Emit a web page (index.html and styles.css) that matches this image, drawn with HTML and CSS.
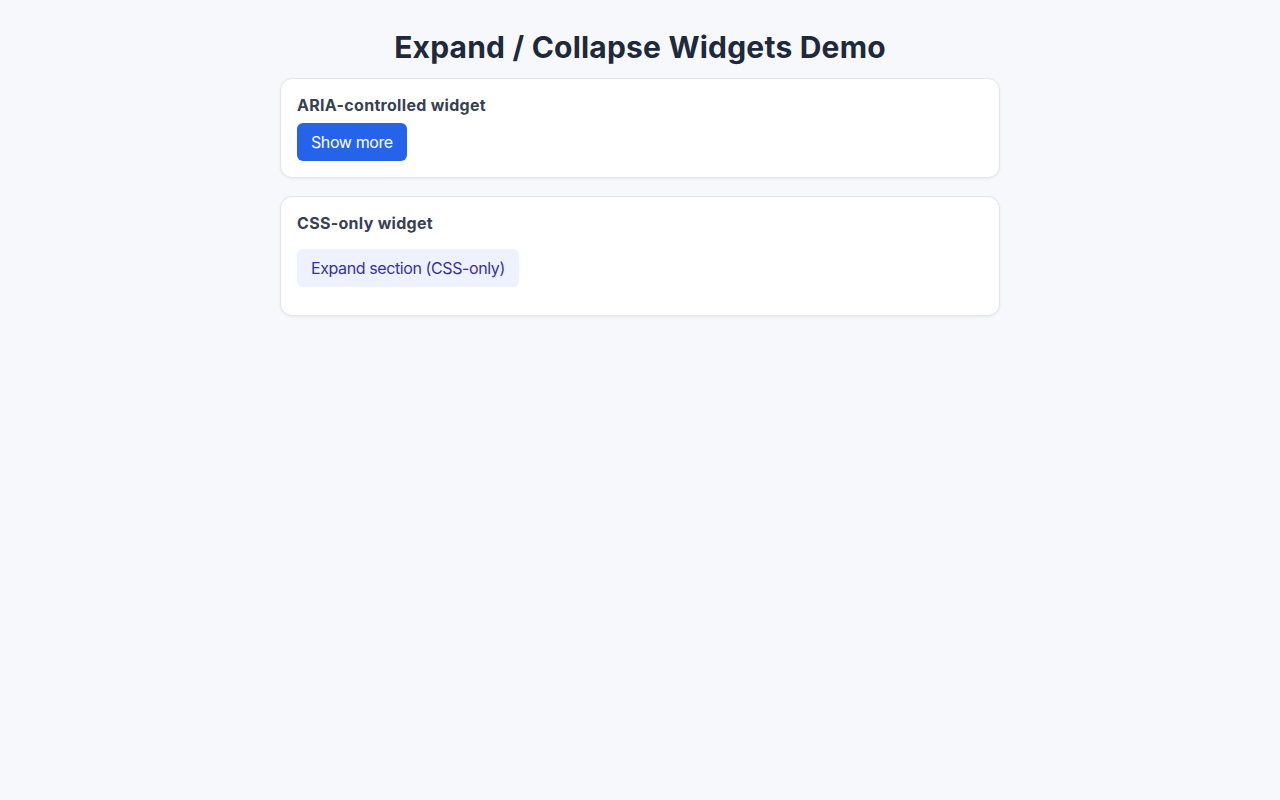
FILE: index.html
```html
<!DOCTYPE html>
<html lang="en">
<head>
    <meta charset="UTF-8">
    <meta name="viewport" content="width=device-width, initial-scale=1.0">
    <title>Expand / Collapse Widgets Demo</title>
    <link rel="stylesheet" href="styles.css">
</head>
<body>

    <main class="container">
        <h1>Expand / Collapse Widgets Demo</h1>

        <!-- Widget com aria-expanded -->
        <section class="card">
            <h2>ARIA-controlled widget</h2>
            <button class="btn-primary" id="toggleBtn" aria-expanded="false" aria-controls="ariaPanel">Show more</button>
            <div class="panel" id="ariaPanel" hidden>
                <p>This content is shown and hidden using JavaScript and aria-expanded.</p>
            </div>
        </section>

        <!-- Widget só com CSS -->
        <section class="card">
            <h2>CSS-only widget</h2>
            <input type="checkbox" id="cssToggle" class="css-toggle">
            <label for="cssToggle" class="btn-soft">Expand section (CSS-only)</label>
            <div class="css-panel">
                <p>This section opens without any script, using a hidden checkbox.</p>
            </div>
        </section>
    </main>

    <script>
        const btn = document.getElementById('toggleBtn');
        const panel = document.getElementById('ariaPanel');

        btn.addEventListener('click', function () {
            const aberto = btn.getAttribute('aria-expanded') === 'true';
            btn.setAttribute('aria-expanded', String(!aberto));
            panel.hidden = aberto;
            btn.innerText = aberto ? 'Show more' : 'Show less';
        });
    </script>

</body>
</html>
```

FILE: styles.css
```css
* {
    margin: 0;
    padding: 0;
    box-sizing: border-box;
}
body {
    background-color: #f7f8fb;
    font-family: Inter, 'Noto Sans', sans-serif;
    color: #1f2937;
    line-height: 1.5;
}
.container {
    max-width: 720px;
    margin: 0 auto;
    padding: 29px 0;
}
h1 {
    text-align: center;
    font-size: 30px;
    font-weight: 700;
    letter-spacing: 0.2px;
    line-height: 1.2;
    color: #1e293b;
    margin-bottom: 13px;
}
.card {
    background-color: #fff;
    border: 1px solid #e2e5ea;
    border-radius: 12px;
    padding: 16px;
    box-shadow: 0 1px 3px rgba(15, 23, 42, 0.06);
    margin-bottom: 18px;
}
h2 {
    font-size: 16px;
    font-weight: 700;
    letter-spacing: 0.3px;
    line-height: 20px;
    color: #374151;
    margin-bottom: 8px;
}
.btn-primary {
    display: inline-block;
    font-family: inherit;
    font-size: 16px;
    letter-spacing: -0.4px;
    line-height: 20px;
    padding: 9px 14px;
    border: none;
    border-radius: 6px;
    background-color: #2563eb;
    color: #fff;
    cursor: pointer;
}
.btn-primary:hover {
    background-color: #1d4ed8;
}
.panel {
    margin-top: 12px;
    color: #4b5563;
}
.css-toggle {
    display: none;
}
.btn-soft {
    display: inline-block;
    font-size: 16px;
    letter-spacing: -0.4px;
    line-height: 20px;
    padding: 9px 14px;
    border-radius: 6px;
    background-color: #eef2ff;
    color: #3730a3;
    cursor: pointer;
    margin: 8px 0 12px;
}
.css-panel {
    display: none;
    color: #4b5563;
}
.css-toggle:checked ~ .css-panel {
    display: block;
}
```
